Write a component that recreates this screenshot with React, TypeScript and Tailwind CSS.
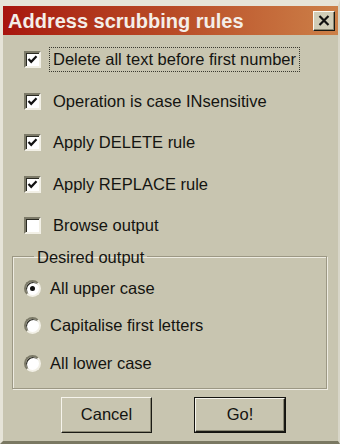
import { useState } from "react";

const font = { fontFamily: '"Liberation Sans", Arial, sans-serif' };

function CheckBox({ checked }: { checked: boolean }) {
  return (
    <span className="flex h-[17px] w-[17px] shrink-0 items-center justify-center border-2 border-t-[#7c7a68] border-l-[#7c7a68] border-b-[#f2f0e6] border-r-[#f2f0e6] bg-white shadow-[inset_1px_1px_0_#2a2a22]">
      {checked && (
        <svg width="11" height="11" viewBox="0 0 11 11">
          <path d="M1.5 5 L4.2 7.8 L9.5 2.2" fill="none" stroke="#111" strokeWidth="2.2" />
        </svg>
      )}
    </span>
  );
}

function Radio({ checked }: { checked: boolean }) {
  return (
    <span className="flex h-[17px] w-[17px] shrink-0 items-center justify-center rounded-full border-2 border-t-[#7c7a68] border-l-[#7c7a68] border-b-[#f2f0e6] border-r-[#f2f0e6] bg-white shadow-[inset_1px_1px_0_#2a2a22]">
      {checked && <span className="h-[5px] w-[5px] rounded-full bg-[#111]" />}
    </span>
  );
}

const rules = [
  { label: "Delete all text before first number", checked: true, focused: true },
  { label: "Operation is case INsensitive", checked: true },
  { label: "Apply DELETE rule", checked: true },
  { label: "Apply REPLACE rule", checked: true },
  { label: "Browse output", checked: false },
];

const outputs = ["All upper case", "Capitalise first letters", "All lower case"];

export default function App() {
  const [selected] = useState(0);

  return (
    <div
      style={font}
      className="flex h-[444px] w-[340px] flex-col border-l-[3px] border-t-[6px] border-b-[3px] border-r-[2px] border-l-[#e6e4d8] border-t-[#e6e4d8] border-b-[#7a7862] border-r-[#d8d6c8] bg-[#c8c5b0] text-[16.5px] text-[#141410]"
    >
      {/* title bar */}
      <div className="flex h-[29px] items-center justify-between bg-gradient-to-r from-[#a8140e] via-[#b84a26] to-[#cc8048] pl-[5px] pr-[3px]">
        <span className="text-[20px] font-bold text-[#f4eee8]">Address scrubbing rules</span>
        <span className="flex h-[20px] w-[22px] items-center justify-center border border-t-[#fbfaf4] border-l-[#fbfaf4] border-b-[#1a1a14] border-r-[#1a1a14] bg-[#d0cdb8] shadow-[inset_-1px_-1px_0_#8a8874]">
          <svg width="12" height="11" viewBox="0 0 12 11">
            <path d="M1.5 1 L10.5 10 M10.5 1 L1.5 10" stroke="#111" strokeWidth="2.2" />
          </svg>
        </span>
      </div>

      {/* options */}
      <div className="flex flex-col pt-[4px]">
        {rules.map((rule) => (
          <div key={rule.label} className="flex h-[41.5px] items-center pl-[21px]">
            <CheckBox checked={rule.checked} />
            <span
              className={`ml-[8px] flex h-[25px] items-center border px-[3px] ${
                rule.focused ? "border-dotted border-[#3a3a30]" : "border-transparent"
              }`}
            >
              {rule.label}
            </span>
          </div>
        ))}
      </div>

      {/* desired output group */}
      <fieldset className="mt-[1px] ml-[9px] h-[141px] w-[315px] border border-[#9c9884] pl-[11px] shadow-[1px_1px_0_#eeece2,inset_1px_1px_0_#eeece2]">
        <legend className="ml-[10px] px-[3px] leading-[18px]">Desired output</legend>
        <div className="flex flex-col pt-[4px]">
          {outputs.map((label, i) => (
            <div key={label} className="flex h-[37.5px] items-center">
              <Radio checked={i === selected} />
              <span className="ml-[9px]">{label}</span>
            </div>
          ))}
        </div>
      </fieldset>

      {/* buttons */}
      <div className="mt-[8px] flex gap-[42px] pl-[58px]">
        <button className="flex h-[36px] w-[91px] items-center justify-center border border-t-[#f6f4ec] border-l-[#f6f4ec] border-b-[#1a1a14] border-r-[#1a1a14] bg-[#c8c5b0] shadow-[inset_-1px_-1px_0_#8a8874]">
          Cancel
        </button>
        <button className="h-[36px] w-[92px] border border-[#141410] bg-[#c8c5b0]">
          <span className="flex h-full w-full items-center justify-center border border-t-[#f6f4ec] border-l-[#f6f4ec] border-b-[#1a1a14] border-r-[#1a1a14] shadow-[inset_-1px_-1px_0_#8a8874]">
            Go!
          </span>
        </button>
      </div>
    </div>
  );
}
